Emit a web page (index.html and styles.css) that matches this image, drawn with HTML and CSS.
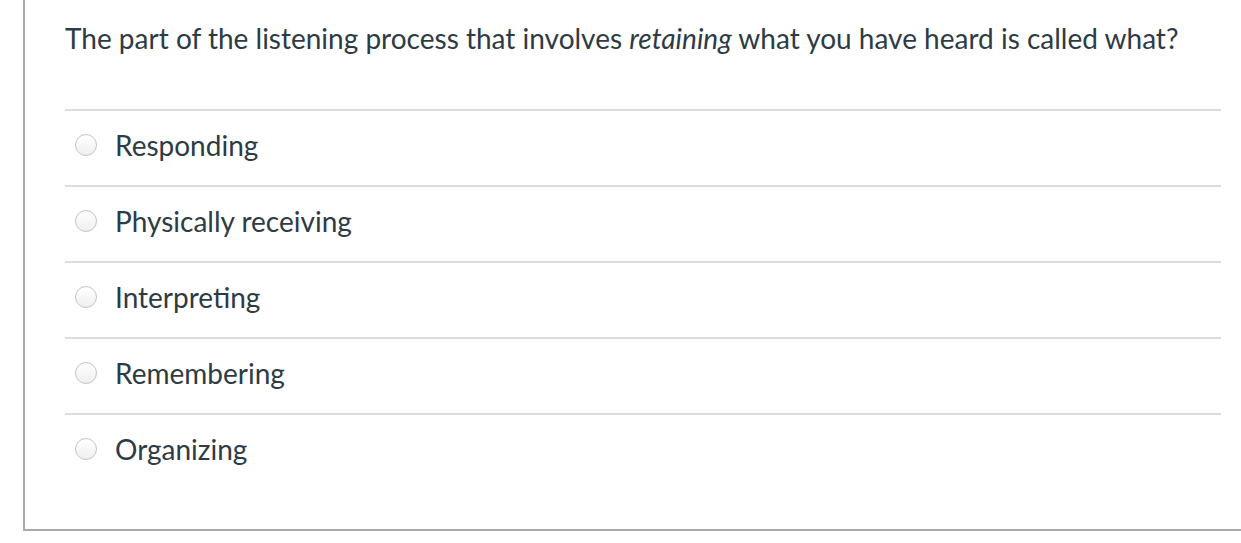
FILE: index.html
```html
<!DOCTYPE html>
<html>
<head>
<meta charset="utf-8">
<link rel="stylesheet" href="styles.css">
</head>
<body>
<div class="question">
  <div class="question-text">The part of the listening process that involves <em>retaining</em> what you have heard is called what?</div>
  <div class="answers">
    <label class="answer"><span class="radio"></span><span class="answer-label">Responding</span></label>
    <label class="answer"><span class="radio"></span><span class="answer-label">Physically receiving</span></label>
    <label class="answer"><span class="radio"></span><span class="answer-label">Interpreting</span></label>
    <label class="answer"><span class="radio"></span><span class="answer-label">Remembering</span></label>
    <label class="answer"><span class="radio"></span><span class="answer-label">Organizing</span></label>
  </div>
</div>
</body>
</html>
```

FILE: styles.css
```css
html, body {
  margin: 0;
  padding: 0;
  background: #ffffff;
}
body {
  font-family: Lato, "Liberation Sans", sans-serif;
  color: #2d3b45;
}
.question {
  margin-left: 23px;
  box-sizing: border-box;
  border-left: 2px solid #aaaaaa;
  border-bottom: 2px solid #aaaaaa;
  height: 531px;
  padding: 0 20px 0 40px;
}
.question-text {
  font-size: 28px;
  line-height: 36px;
  padding-top: 20px;
  height: 109px;
  box-sizing: border-box;
}
.question-text em {
  font-style: italic;
}
.answers {
  display: flex;
  flex-direction: column;
}
.answer {
  display: flex;
  align-items: center;
  height: 76px;
  box-sizing: border-box;
  border-top: 2px solid #dddddd;
  padding-left: 10px;
  padding-bottom: 6px;
}
.radio {
  width: 22px;
  height: 22px;
  border-radius: 50%;
  border: 1px solid #c4c4c4;
  background: linear-gradient(#ffffff, #efefef);
  box-sizing: border-box;
  flex: none;
  margin-right: 18px;
}
.answer-label {
  font-size: 28px;
  line-height: 36px;
}
```
